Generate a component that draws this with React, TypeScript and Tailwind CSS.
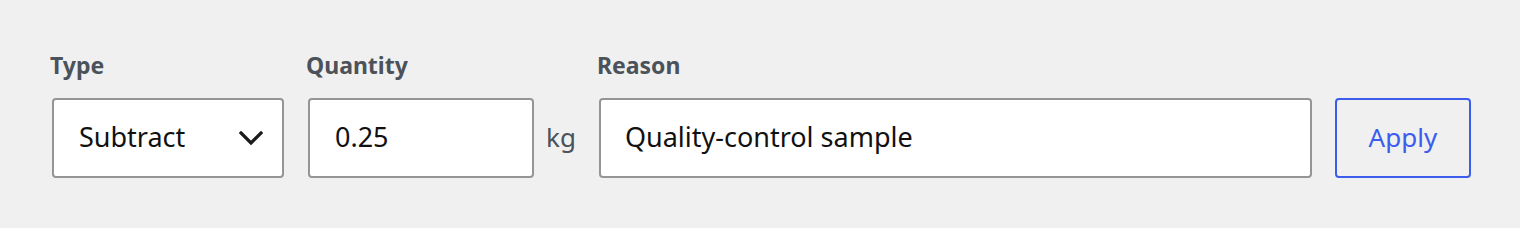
import React from "react";

const font = { fontFamily: '"Noto Sans", "Open Sans", sans-serif' };

export default function App() {
  return (
    <div
      className="w-[1520px] h-[228px] bg-[#f0f0f0] pl-[50px] pt-[50px] flex items-end"
      style={font}
    >
      <div className="flex items-end pb-[50px]">
        <div className="flex flex-col">
          <label className="text-[23px] font-bold text-[#4b5259] leading-[30px] mb-[18px]">Type</label>
          <div className="ml-[2px] w-[232px] h-[80px] bg-white border-2 border-[#959595] rounded-[4px] flex items-center justify-between pl-[25px] pr-[19px] pb-[3px]">
            <span className="text-[27px] text-[#111] leading-none">Subtract</span>
            <svg width="24" height="15" viewBox="0 0 24 15" fill="none" className="mt-[3px]">
              <polyline points="2,2 12,12 22,2" stroke="#1a1a1a" strokeWidth="3.2" strokeLinecap="square" />
            </svg>
          </div>
        </div>
        <div className="flex flex-col ml-[22px]">
          <label className="text-[23px] font-bold text-[#4b5259] leading-[30px] mb-[18px]">Quantity</label>
          <div className="ml-[2px] w-[226px] h-[80px] bg-white border-2 border-[#959595] rounded-[4px] flex items-center pl-[25px] pb-[3px]">
            <span className="text-[27px] text-[#111] leading-none">0.25</span>
          </div>
        </div>
        <div className="h-[80px] flex items-center ml-[12px] pb-[3px]">
          <span className="text-[26px] text-[#4b5259] leading-none">kg</span>
        </div>
        <div className="flex flex-col ml-[21px]">
          <label className="text-[23px] font-bold text-[#4b5259] leading-[30px] mb-[18px]">Reason</label>
          <div className="ml-[2px] w-[713px] h-[80px] bg-white border-2 border-[#959595] rounded-[4px] flex items-center pl-[24px] pb-[3px]">
            <span className="text-[27px] text-[#111] leading-none">Quality-control sample</span>
          </div>
        </div>
        <button className="ml-[23px] w-[136px] h-[80px] border-2 border-[#3b5ced] rounded-[4px] flex items-center justify-center bg-transparent pb-[3px]">
          <span className="text-[26px] text-[#3b5ced] leading-none">Apply</span>
        </button>
      </div>
    </div>
  );
}
